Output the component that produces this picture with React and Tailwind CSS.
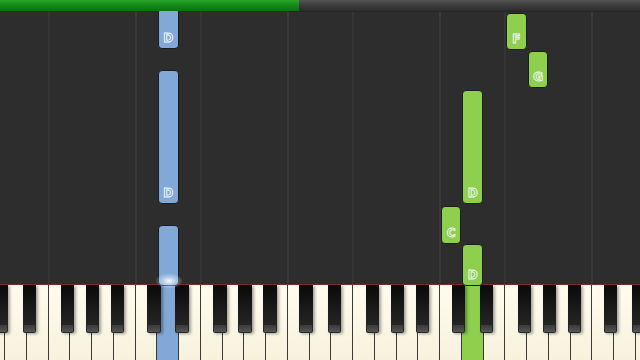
import React from "react";

const W = 21.7586;
const X0 = -16.76;
const kx = (i) => X0 + i * W;

const BLUE = "#82a8d7";
const GREEN = "#8ecf4e";

const blackOffsets = [11.5, 39.7, 77.7, 102.7, 127.7];
const OCT = W * 7;

const notes = [
  { key: 8, top: -4, bottom: 37, color: BLUE, label: "D" },
  { key: 8, top: 58, bottom: 192, color: BLUE, label: "D" },
  { key: 8, top: 213, bottom: 274, color: BLUE, label: "" },
  { key: 24, top: 1, bottom: 38, color: GREEN, label: "F" },
  { key: 25, top: 39, bottom: 76, color: GREEN, label: "G" },
  { key: 22, top: 78, bottom: 192, color: GREEN, label: "D" },
  { key: 21, top: 194, bottom: 232, color: GREEN, label: "C" },
  { key: 22, top: 232, bottom: 274, color: GREEN, label: "D" },
];

const gridLines = [3, 7, 10, 14, 17, 21, 24, 28];

export default function App() {
  const whites = Array.from({ length: 31 }, (_, i) => i);
  const blacks = [];
  for (let o = -1; o < 5; o++) {
    blackOffsets.forEach((off) => {
      const x = X0 + o * OCT + off;
      if (x > -20 && x < 650) blacks.push(x);
    });
  }
  return (
    <div className="relative w-[640px] h-[360px] flex flex-col bg-[#2d2d2d] overflow-hidden font-['DejaVu_Sans',sans-serif]">
      <div className="h-[11px] flex shrink-0 relative z-20">
        <div className="w-[299px] bg-gradient-to-b from-[#2aa62a] via-[#14891a] to-[#0a720d]" />
        <div className="flex-1 bg-gradient-to-b from-[#555555] via-[#3c3c3c] to-[#2c2c2c]" />
      </div>
      <div className="relative flex-1 border-t border-[#262626]">
        {gridLines.map((g) => (
          <div
            key={g}
            className={`absolute top-0 bottom-0 w-[2px] ${g % 7 === 0 ? "bg-[#393939]" : "bg-[#353535]"}`}
            style={{ left: kx(g) - 1 }}
          />
        ))}
        {notes.map((n, i) => (
          <div
            key={i}
            className="absolute rounded-[4px] border border-[#1c1c1c] flex items-end justify-center pb-[3px] z-10"
            style={{
              left: kx(n.key) + 0.5,
              width: W - 1,
              top: n.top,
              height: n.bottom - n.top,
              backgroundColor: n.color,
            }}
          >
            {n.label && (
              <span
                className="text-[12px] leading-[13px] font-bold [-webkit-text-stroke:0.9px_#f3f6f8]"
                style={{ color: n.color }}
              >
                {n.label}
              </span>
            )}
          </div>
        ))}
      </div>
      <div className="h-[2px] shrink-0 bg-gradient-to-b from-[#4a1414] to-[#9a2a2a]" />
      <div className="relative h-[75px] shrink-0 overflow-hidden bg-[#fbf8e9]">
        <div className="flex h-full ml-[-16.76px]">
          {whites.map((i) => {
            const pressed = i === 8 ? BLUE : i === 22 ? GREEN : null;
            return (
              <div
                key={i}
                className="w-[21.7586px] shrink-0 h-full border-r-[1.5px] border-[#3c3a34] bg-gradient-to-b from-[#fffcee] to-[#f6f2de]"
                style={pressed ? { background: pressed } : undefined}
              />
            );
          })}
        </div>
        {blacks.map((x, i) => (
          <div
            key={i}
            className="absolute top-0 w-[13.5px] h-[48px] rounded-b-[2px] bg-gradient-to-b from-[#0a0a0a] via-[#1a1a1a] to-[#2a2a2a] shadow-[2px_1px_3px_rgba(0,0,0,0.35)] flex flex-col justify-end"
            style={{ left: x }}
          >
            <div className="h-[7px] mx-[1px] mb-[1px] rounded-b-[1px] bg-gradient-to-b from-[#3a3a3a] to-[#555]" />
          </div>
        ))}
      </div>
      <div className="pointer-events-none absolute left-[155px] top-[273px] w-[28px] h-[16px] z-30 bg-[radial-gradient(ellipse_at_center,rgba(255,255,255,0.95)_0%,rgba(220,235,255,0.5)_35%,rgba(255,255,255,0)_70%)]" />
    </div>
  );
}
